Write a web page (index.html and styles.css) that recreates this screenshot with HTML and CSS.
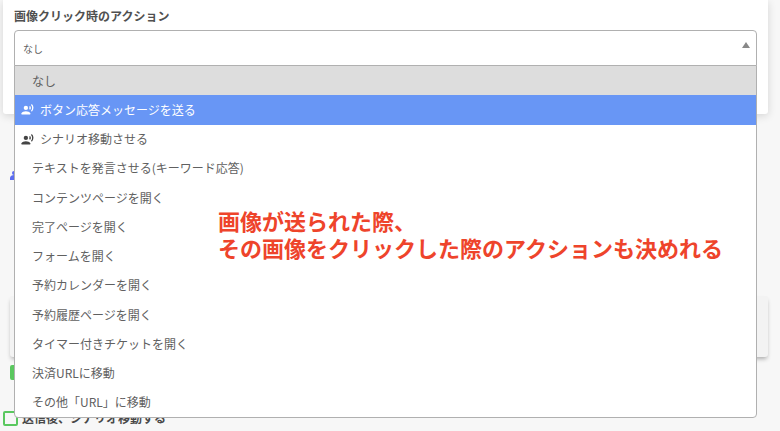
FILE: index.html
```html
<!DOCTYPE html>
<html lang="ja">
<head>
  <meta charset="UTF-8" />
  <meta name="viewport" content="width=device-width, initial-scale=1.0" />
  <title>画像クリック時のアクション</title>
  <link rel="stylesheet" href="styles.css">
</head>
<body>
  <!-- Voice icon shared by the menu items -->
  <svg class="sprite" aria-hidden="true">
    <symbol id="voice" viewBox="0 0 24 24">
      <circle cx="9" cy="9" r="4" />
      <path d="M9 15c-2.700 0-8 1.300-8 4v2h16v-2c0-2.700-5.300-4-8-4z" />
      <path d="M16.760 5.360l-1.680 1.690c.840 1.180.840 2.710 0 3.890l1.680 1.690c2.020-2.020 2.020-5.070 0-7.270z" />
      <path d="M20.070 2l-1.630 1.630c2.770 3.020 2.770 7.560 0 10.740L20.070 16c3.900-3.890 3.910-9.950 0-14z" />
    </symbol>
  </svg>

  <main class="page">
    <section class="card">
      <label class="field-label" for="action">画像クリック時のアクション</label>
      <div class="dropdown">
        <select class="dropdown-select" id="action">
          <option>なし</option>
        </select>
        <span class="dropdown-arrow"></span>

        <div class="menu" role="listbox" aria-label="画像クリック時のアクション">
          <button class="menu-item selected" type="button" role="option" aria-selected="true">なし</button>
          <button class="menu-item with-icon active" type="button" role="option"><svg class="menu-icon"><use href="#voice" /></svg>ボタン応答メッセージを送る</button>
          <button class="menu-item with-icon" type="button" role="option"><svg class="menu-icon"><use href="#voice" /></svg>シナリオ移動させる</button>
          <button class="menu-item" type="button" role="option">テキストを発言させる(キーワード応答)</button>
          <button class="menu-item" type="button" role="option">コンテンツページを開く</button>
          <button class="menu-item" type="button" role="option">完了ページを開く</button>
          <button class="menu-item" type="button" role="option">フォームを開く</button>
          <button class="menu-item" type="button" role="option">予約カレンダーを開く</button>
          <button class="menu-item" type="button" role="option">予約履歴ページを開く</button>
          <button class="menu-item" type="button" role="option">タイマー付きチケットを開く</button>
          <button class="menu-item" type="button" role="option">決済URLに移動</button>
          <button class="menu-item" type="button" role="option">その他「URL」に移動</button>
          <p class="note">画像が送られた際、<br>その画像をクリックした際のアクションも決めれる</p>
        </div>
      </div>
    </section>

    <!-- Rest of the form, mostly under the open menu -->
    <section class="settings">
      <svg class="user-icon" viewBox="0 0 16 16"><circle cx="4" cy="5" r="2" /><path d="M0 12v-2c0-2 2-3 4-3s4 1 4 3v2z" /></svg>
      <div class="panel"></div>
      <input class="check" type="checkbox" aria-label="設定" checked>
    </section>
    <div class="check-row">
      <input class="check" type="checkbox" id="after">
      <label for="after">送信後、シナリオ移動する</label>
    </div>
  </main>
</body>
</html>
```
FILE: styles.css
```css
* { box-sizing: border-box; }
body {
  margin: 0;
  background: #f7f7f7;
  color: #606060;
  font-family: "Noto Sans CJK JP", sans-serif;
  font-size: 12px;
  overflow: hidden;
}
.sprite { position: absolute; width: 0; height: 0; }
.page { padding: 0 12px 0 3px; }
.card {
  padding: 8px 11px 48px;
  background: #fff;
  border-radius: 0 0 3px 3px;
  box-shadow: 0 2px 8px rgba(0, 0, 0, 0.14);
}
.field-label {
  display: block;
  margin-bottom: 6px;
  line-height: 16px;
  font-weight: bold;
  color: #505050;
}

/* Dropdown */
.dropdown { position: relative; }
.dropdown-select {
  display: block;
  width: 100%;
  height: 36px;
  padding: 0 8px;
  appearance: none;
  background: #fff;
  border: 1px solid #b0b0b0;
  border-radius: 4px 4px 0 0;
  color: #606060;
  font-family: inherit;
  font-size: 10px;
}
.dropdown-arrow {
  position: absolute;
  top: 12px;
  right: 7px;
  border: 4px solid transparent;
  border-top: 0;
  border-bottom: 6px solid #888;
}
.menu {
  position: absolute;
  top: 35px;
  left: 0;
  z-index: 10;
  display: flex;
  flex-direction: column;
  width: 100%;
  height: 353px;
  background: #fff;
  border: 1px solid #b0b0b0;
  border-radius: 0 0 4px 4px;
  overflow: hidden;
}
.menu-item {
  display: flex;
  flex: 1;
  align-items: center;
  padding: 0 17px;
  background: none;
  border: 0;
  color: #606060;
  font-family: inherit;
  font-size: 12px;
  line-height: 16px;
  text-align: left;
}
.menu-item.selected { background: #ddd; }
.menu-item.with-icon { gap: 6px; padding-left: 6px; }
.menu-item.active { background: #6896f5; color: #fff; }
.menu-icon { width: 13px; height: 13px; fill: #444; }
.active .menu-icon { fill: #fff; }

/* Red note over the menu */
.note {
  position: absolute;
  top: 141px;
  left: 203px;
  margin: 0;
  color: #ee442b;
  font-size: 22px;
  font-weight: bold;
  line-height: 27px;
  white-space: nowrap;
  pointer-events: none;
}

/* Form under the menu */
.settings { padding: 54px 0 0 7px; }
.user-icon {
  display: block;
  width: 16px;
  height: 16px;
  margin-bottom: 112px;
  fill: #5b6cf0;
}
.panel {
  height: 61px;
  margin-bottom: 8px;
  background: #f3f3f3;
  border-radius: 3px;
  box-shadow: 0 3px 4px -1px rgba(0, 0, 0, 0.3);
}
.check {
  display: block;
  width: 15px;
  height: 15px;
  margin: 0;
  appearance: none;
  border: 2px solid #5ac85f;
  border-radius: 2px;
}
.check:checked { background: #5ac85f; }
.check-row {
  display: flex;
  align-items: center;
  gap: 4px;
  padding-top: 30px;
  color: #484848;
  font-weight: bold;
  line-height: 16px;
}
```
